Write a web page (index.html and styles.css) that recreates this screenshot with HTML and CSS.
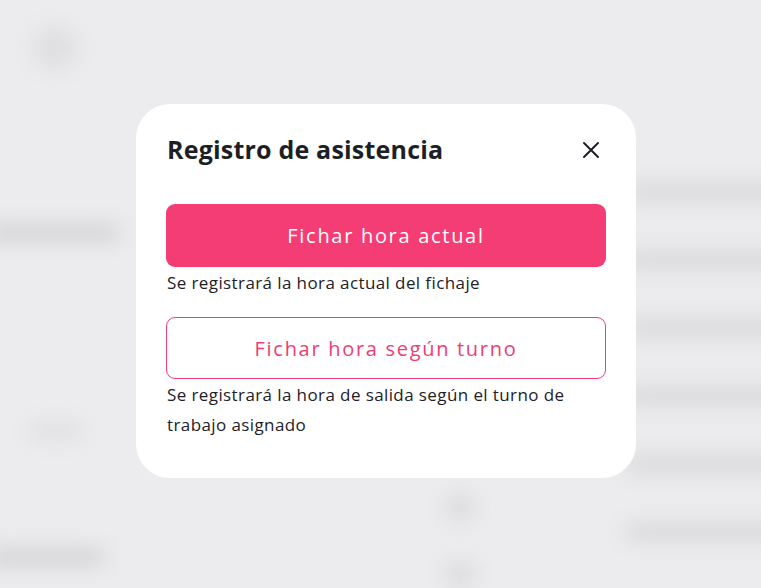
FILE: index.html
```html
<!DOCTYPE html>
<html lang="es">
<head>
<meta charset="utf-8">
<title>Registro de asistencia</title>
<link rel="stylesheet" href="styles.css">
</head>
<body>
<div class="backdrop" aria-hidden="true">
  <aside class="side">
    <div class="side-logo"></div>
    <div class="side-bar side-bar-1"></div>
    <div class="side-bar side-bar-2"></div>
    <div class="side-bar side-bar-3"></div>
  </aside>
  <main class="main">
    <div class="row"><span class="cell-dot"></span><span class="cell-bar"></span></div>
    <div class="row"><span class="cell-dot"></span><span class="cell-bar"></span></div>
    <div class="row"><span class="cell-dot"></span><span class="cell-bar"></span></div>
    <div class="row"><span class="cell-dot"></span><span class="cell-bar"></span></div>
    <div class="row"><span class="cell-dot show"></span><span class="cell-bar"></span></div>
    <div class="row"><span class="cell-dot show"></span><span class="cell-bar"></span></div>
  </main>
</div>

<div class="overlay">
  <div class="modal" role="dialog" aria-labelledby="modal-title">
    <div class="modal-head">
      <h2 id="modal-title" class="modal-title">Registro de asistencia</h2>
      <button class="close" aria-label="Cerrar">
        <svg width="20" height="20" viewBox="0 0 20 20"><path d="M3 3 L17 17 M17 3 L3 17" stroke="#1e1f26" stroke-width="2" stroke-linecap="round" fill="none"/></svg>
      </button>
    </div>
    <div class="option">
      <button class="btn btn-primary">Fichar hora actual</button>
      <p class="hint">Se registrará la hora actual del fichaje</p>
    </div>
    <div class="option option-2">
      <button class="btn btn-outline">Fichar hora según turno</button>
      <p class="hint">Se registrará la hora de salida según el turno de trabajo asignado</p>
    </div>
  </div>
</div>
</body>
</html>
```
FILE: styles.css
```css
* { box-sizing: border-box; }
html, body { margin: 0; height: 100%; }
body {
  background: #ececee;
  font-family: "Open Sans", "Noto Sans", sans-serif;
  color: #1e2129;
  overflow: hidden;
  position: relative;
}

.backdrop {
  display: flex;
  height: 100%;
  filter: blur(10px);
}
.side {
  width: 255px;
  display: flex;
  flex-direction: column;
  padding-top: 26px;
}
.side-logo {
  width: 44px; height: 44px;
  border-radius: 50%;
  background: #dfdfe1;
  margin-left: 33px;
}
.side-bar { height: 18px; border-radius: 9px; background: #d3d3d5; }
.side-bar-1 { width: 135px; margin-left: -15px; margin-top: 154px; }
.side-bar-2 { width: 55px; margin-left: 28px; margin-top: 180px; background: #e0e0e2; }
.side-bar-3 { width: 120px; margin-left: -15px; margin-top: 108px; }

.main {
  flex: 1;
  display: flex;
  flex-direction: column;
  padding-top: 182px;
}
.row {
  height: 77px;
  display: flex;
  align-items: flex-start;
  padding-left: 190px;
  margin-right: -30px;
}
.cell-dot {
  width: 30px; height: 30px; border-radius: 50%;
  background: transparent;
  margin-top: 38px;
}
.cell-dot.show { background: #dcdcde; }
.cell-bar {
  margin-left: 150px;
  flex: 1;
  height: 20px; border-radius: 10px;
  background: #dadadc;
}

.overlay {
  position: absolute;
  inset: 0;
  display: flex;
  align-items: flex-start;
  justify-content: center;
  padding-top: 104px;
  padding-left: 11px;
}
.modal {
  width: 500px;
  background: #fff;
  border-radius: 34px;
  padding: 27px 30px 38px 30px;
}
.modal-head {
  display: flex;
  align-items: center;
  justify-content: space-between;
  height: 36px;
}
.modal-title {
  margin: 0 0 0 1px;
  font-size: 25px;
  font-weight: 700;
  letter-spacing: 0.2px;
  color: #1e1f26;
  line-height: 36px;
}
.close {
  border: 0; background: none; padding: 0;
  width: 20px; height: 20px;
  margin-right: 5px;
  margin-top: 2px;
  display: flex;
}
.option { margin-top: 37px; }
.option-2 { margin-top: 19px; }
.btn {
  display: block;
  width: 100%;
  height: 63px;
  border-radius: 9px;
  font-family: inherit;
  font-size: 20px;
  letter-spacing: 1.7px;
  cursor: pointer;
}
.btn-primary {
  background: #f33d74;
  border: 0;
  color: #fff;
}
.btn-outline {
  background: #fff;
  border: 1px solid #f03c72;
  color: #f03c72;
  height: 62px;
}
.hint {
  margin: 1px 0 0 1px;
  font-size: 17px;
  letter-spacing: 0.4px;
  line-height: 30px;
  color: #1e2129;
}
```
